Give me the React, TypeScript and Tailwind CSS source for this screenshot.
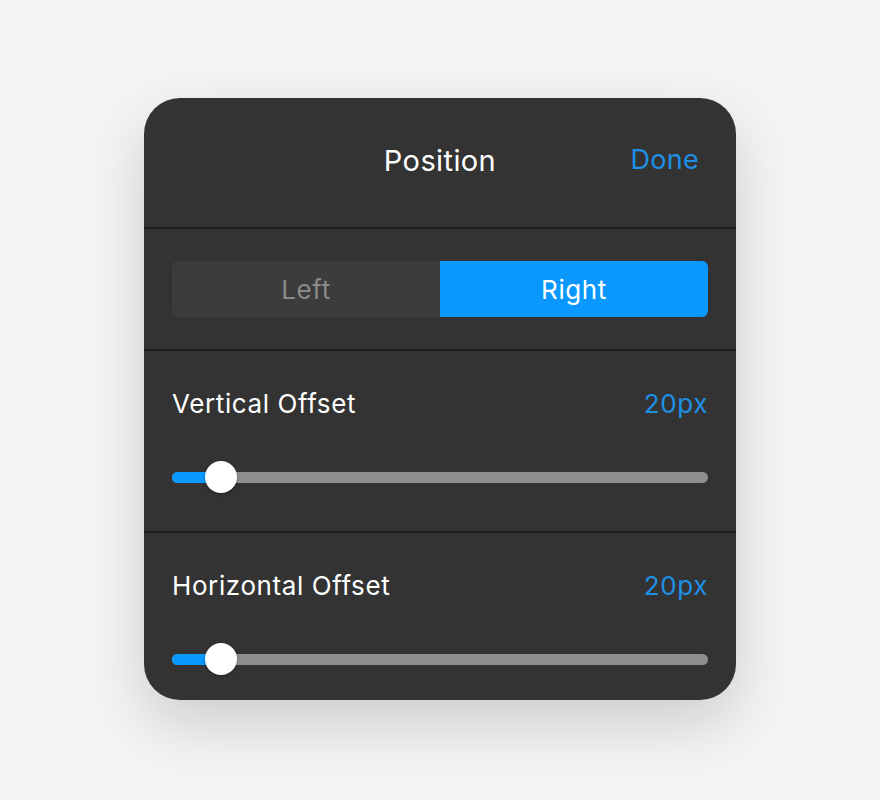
import React from "react";

const Slider = ({ value }: { value: number }) => {
  return (
    <div className="relative h-8 flex items-center">
      <div className="h-[11px] w-full rounded-full bg-[#8e8e8e]" />
      <div
        className="absolute left-0 h-[11px] rounded-l-full bg-[#0a98fe]"
        style={{ width: `${value}%` }}
      />
      <div
        className="absolute top-0 h-8 w-8 -ml-4 rounded-full bg-white shadow-[0_1px_3px_rgba(0,0,0,0.3)]"
        style={{ left: `${value}%` }}
      />
    </div>
  );
};

const OffsetRow = ({ label, value, last }: { label: string; value: string; last?: boolean }) => (
  <div className={`px-7 pt-[38px] ${last ? "pb-[24px]" : "pb-[38px]"}`}>
    <div className="flex items-center justify-between h-7 text-[26px] tracking-[0.6px]">
      <span className="text-white">{label}</span>
      <span className="text-[#1e90e6]">{value}</span>
    </div>
    <div className="mt-[44px]">
      <Slider value={9.1} />
    </div>
  </div>
);

export default function App() {
  return (
    <div
      className="min-h-[800px] w-full bg-[#f4f4f6] flex justify-center pt-[98px]"
      style={{ fontFamily: "Inter, 'Noto Sans', sans-serif" }}
    >
      <div className="w-[592px] h-[602px] rounded-[36px] bg-[#333333] overflow-hidden shadow-[0_24px_60px_rgba(0,0,0,0.16)]">
        <div className="h-[129px] grid grid-cols-[1fr_auto_1fr] items-center px-[37px] pb-1">
          <div />
          <span className="text-white text-[29px] tracking-[0.4px]">Position</span>
          <span className="justify-self-end text-[#1e90e6] text-[27px] tracking-[0.3px]">Done</span>
        </div>
        <div className="border-t-2 border-[#1f1f1f] px-7 pt-[32px] pb-[32px]">
          <div className="grid grid-cols-2 h-14 rounded-md overflow-hidden text-[26px] tracking-[0.6px]">
            <div className="bg-[#3c3c3c] text-[#8a8a8a] flex items-center justify-center">Left</div>
            <div className="bg-[#0a98fe] text-white flex items-center justify-center">Right</div>
          </div>
        </div>
        <div className="border-t-2 border-[#1f1f1f]">
          <OffsetRow label="Vertical Offset" value="20px" />
        </div>
        <div className="border-t-2 border-[#1f1f1f]">
          <OffsetRow label="Horizontal Offset" value="20px" last />
        </div>
      </div>
    </div>
  );
}
